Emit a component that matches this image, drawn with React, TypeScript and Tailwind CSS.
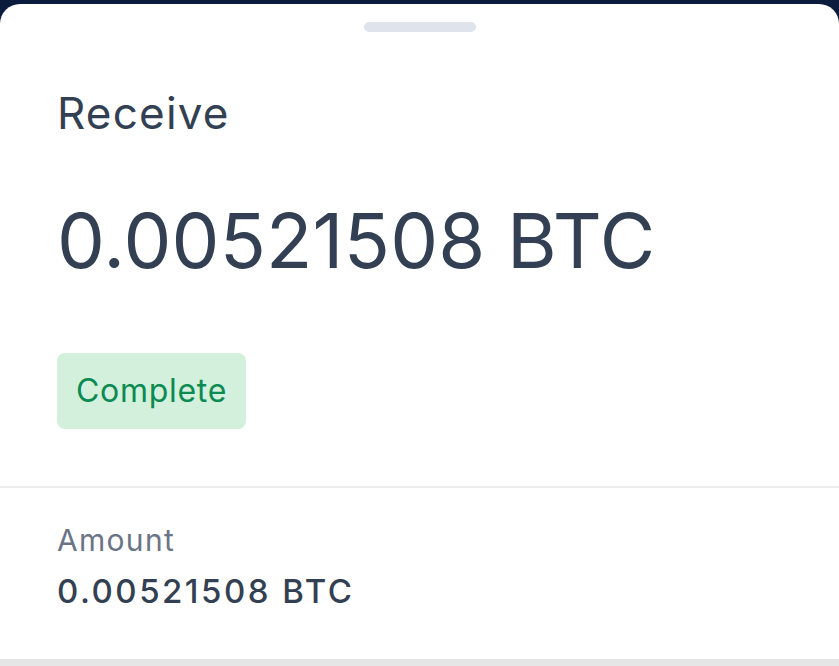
const font = { fontFamily: "Inter, 'Noto Sans', sans-serif" };

export default function App() {
  return (
    <div className="h-[666px] overflow-hidden bg-[#0b1b3d] pt-[4px]" style={font}>
      <div className="h-full rounded-t-[20px] bg-white">
        {/* drag handle */}
        <div className="flex justify-center pt-[18px]">
          <div className="h-[10px] w-[112px] rounded-full bg-[#dfe3ec]" />
        </div>

        <div className="px-[57px] pb-[57px]">
          <h1 className="mt-[59px] text-[44px] leading-[44px] font-normal tracking-[1.2px] text-[#333f52]">Receive</h1>
          <div className="mt-[67px] text-[76px] leading-[76px] font-normal tracking-[0.2px] text-[#333f52]">
            0.00521508 BTC
          </div>
          <div className="mt-[75px] flex">
            <span className="flex h-[76px] items-center rounded-[8px] bg-[#d3f0dd] px-[19px] text-[32px] tracking-[0.7px] text-[#0b8a52]">
              Complete
            </span>
          </div>
        </div>

        <div className="border-t-2 border-[#ececec] px-[57px] pb-[53px]">
          <div className="mt-[37px] text-[30px] leading-[30px] tracking-[1.3px] text-[#6b7486]">Amount</div>
          <div className="mt-[21px] text-[33px] leading-[30px] font-medium tracking-[2.5px] text-[#333f52]">0.00521508 BTC</div>
        </div>
        <div className="h-[8px] bg-[#e6e6e6]" />
      </div>
    </div>
  );
}
